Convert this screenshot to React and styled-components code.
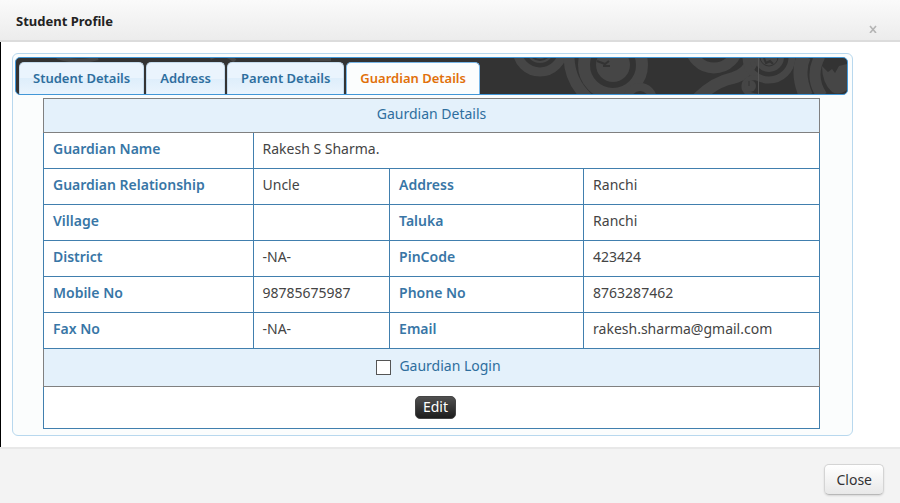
import React, { useState } from 'react';
import styled, { createGlobalStyle } from 'styled-components';

const GlobalStyle = createGlobalStyle`
  * {
    box-sizing: border-box;
  }

  body {
    margin: 0;
    background: #f3f3f3;
    color: #444;
    font-family: 'Noto Sans', 'Open Sans', sans-serif;
    font-size: 14px;
    line-height: 20px;
  }
`;

const Dialog = styled.div`
  display: flex;
  flex-direction: column;
  min-height: 100vh;
`;

const Header = styled.header`
  display: flex;
  justify-content: space-between;
  align-items: flex-start;
  padding: 11px 22px 9px 16px;
  border-bottom: 2px solid #dcdcdc;
  background: linear-gradient(#fafafa, #ececec);
`;

const Title = styled.h1`
  margin: 0;
  color: #222;
  font-size: 13px;
  line-height: 20px;
  font-weight: 700;
`;

const CloseIcon = styled.button`
  align-self: flex-end;
  height: 12px;
  padding: 0;
  border: none;
  background: none;
  color: #b4b4b4;
  cursor: pointer;

  svg {
    display: block;
  }
`;

const Body = styled.main`
  padding: 11px 47px 11px 11px;
  border-left: 1px solid #000;
  background: #fff;
`;

const TabsPanel = styled.section`
  padding: 3px 4px 6px 2px;
  border: 1px solid #b8d8ee;
  border-radius: 6px;
  background: #fbfdfd;
`;

const TabList = styled.nav`
  position: relative;
  display: flex;
  align-items: flex-end;
  height: 38px;
  padding: 0 3px;
  overflow: hidden;
  border: 1px solid #4297d7;
  border-radius: 5px;
  background: #333;
`;

// decorative layer behind the tabs
const Swirls = styled.svg`
  position: absolute;
  top: 0;
  right: 0;
`;

const Tab = styled.a`
  position: relative;
  height: 32px;
  margin-right: 2px;
  padding: 5px 13px;
  border: 1px solid ${(props) => (props.$active ? '#79b7e7' : '#c5dbec')};
  border-bottom: none;
  border-radius: 5px 5px 0 0;
  background: ${(props) =>
    props.$active ? '#fbfdfd' : 'linear-gradient(#eaf4fd 50%, #deeefb 50%, #eaf4fd)'};
  color: ${(props) => (props.$active ? '#e17009' : '#2e6e9e')};
  font-size: 13px;
  font-weight: 600;
  text-decoration: none;
  white-space: nowrap;
`;

const DetailsTable = styled.table`
  width: calc(100% - 56px);
  margin: 3px 28px 0;
  border-collapse: collapse;
  table-layout: fixed;
  background: #fff;
`;

const Row = styled.tr`
  height: 36px;
`;

const Label = styled.th`
  padding: 0 9px 4px;
  border: 1px solid #417fae;
  color: #3876a6;
  font-weight: 600;
  text-align: left;
`;

const Value = styled.td`
  padding: 0 9px 4px;
  border: 1px solid #417fae;
`;

const BandRow = styled.tr`
  height: ${(props) => props.$height};
`;

const Band = styled.td`
  padding: 0 0 4px;
  border: 1px solid #808080;
  background: #e4f1fb;
  color: #2e6e9e;
  text-align: center;
`;

const LoginLabel = styled.label`
  display: flex;
  justify-content: center;
  align-items: center;
  gap: 8px;
  padding-left: 14px;
`;

const Checkbox = styled.input`
  appearance: none;
  width: 15px;
  height: 15px;
  margin: 4px 0 0;
  border: 1px solid #555;
  background: #fff;

  &:checked {
    background: #2e6e9e;
    box-shadow: inset 0 0 0 2px #fff;
  }
`;

const Actions = styled.td`
  padding: 0;
  border: 1px solid #417fae;
  text-align: center;
`;

const EditButton = styled.button`
  height: 23px;
  margin-left: 8px;
  padding: 0 7px 2px;
  border: 1px solid #444;
  border-radius: 5px;
  background: linear-gradient(#505050, #1c1c1c);
  color: #fff;
  font: inherit;
  vertical-align: middle;
  cursor: pointer;
`;

const Footer = styled.footer`
  display: flex;
  flex: 1;
  justify-content: flex-end;
  align-items: flex-start;
  padding: 15px 16px 8px;
  border-top: 2px solid #e8e8e8;
  background: #f3f3f3;
`;

const CloseButton = styled.button`
  height: 31px;
  padding: 0 11px;
  border: 1px solid #d4d4d4;
  border-bottom-color: #b8b8b8;
  border-radius: 5px;
  background: linear-gradient(#fff, #e8e8e8);
  box-shadow: 0 1px 2px rgba(0, 0, 0, 0.12);
  color: #333;
  font: inherit;
  cursor: pointer;
`;

const tabs = ['Student Details', 'Address', 'Parent Details', 'Guardian Details'];

const details = [
  ['Guardian Relationship', 'Uncle', 'Address', 'Ranchi'],
  ['Village', '', 'Taluka', 'Ranchi'],
  ['District', '-NA-', 'PinCode', '423424'],
  ['Mobile No', '98785675987', 'Phone No', '8763287462'],
  ['Fax No', '-NA-', 'Email', 'rakesh.sharma@gmail.com'],
];

const NavPattern = () => (
  <Swirls width="832" height="36" viewBox="15 58 832 36" fill="none" aria-hidden="true">
    <g stroke="#464646">
      <circle cx="540" cy="49" r="23" strokeWidth="9" />
      <path d="M569 56 Q569 82 590 100" strokeWidth="11" />
      <circle cx="613" cy="65" r="29" strokeWidth="12" />
      <circle cx="640" cy="100" r="13" strokeWidth="8" />
      <circle cx="714" cy="44" r="24" strokeWidth="11" />
      <path d="M698 98 Q714 82 733 78 Q749 74 754 56" strokeWidth="12" />
      <circle cx="769" cy="57" r="23" strokeWidth="7" />
      <path d="M757 96 C738 95 741 75 758 78" strokeWidth="5" />
      <path d="M804 56 Q796 73 806 96" strokeWidth="14" />
      <path d="M820 56 Q809 77 822 96" strokeWidth="11" />
      <path d="M57 57 Q80 64 98 58 M210 58 q15 -7 25 3 M310 59 h21" strokeWidth="4" />
    </g>
    <g fill="#464646">
      <circle cx="540" cy="49" r="14" />
      <circle cx="613" cy="65" r="17" />
      <circle cx="769" cy="57" r="15" />
      <path d="M822 66 l6 6 4 -3 3 4 4 -7 8 -2 v26 q-8 6 -15 2 q-10 -9 -10 -26z" />
      <circle cx="750" cy="86" r="6" />
    </g>
    <g stroke="#333">
      <path d="M597 61 l8 3 4 -3 M603 66 h7 M764 58 l2 5 4 -2 3 3" strokeWidth="2" />
      <path d="M760 57 a9 9 0 0 0 18 0 M749 81 v5" />
      <circle cx="540" cy="49" r="11" strokeWidth="2" />
    </g>
    <path d="M758.5 58 v36" stroke="#555" />
  </Swirls>
);

const App = () => {
  const [login, setLogin] = useState(false);

  return (
    <>
      <GlobalStyle />
      <Dialog>
        <Header>
          <Title>Student Profile</Title>
          <CloseIcon type="button" aria-label="Close dialog">
            <svg width="10" height="14" viewBox="0 0 10 14">
              <path d="M2 7 L8 14 M8 7 L2 14" stroke="currentColor" strokeWidth="1.6" />
            </svg>
          </CloseIcon>
        </Header>

        <Body>
          <TabsPanel>
            <TabList>
              <NavPattern />
              {tabs.map((tab) => (
                <Tab key={tab} href="#" $active={tab === 'Guardian Details'}>
                  {tab}
                </Tab>
              ))}
            </TabList>

            <DetailsTable>
              <colgroup>
                <col width="27%" />
                <col width="17.6%" />
                <col width="25%" />
                <col />
              </colgroup>
              <tbody>
                <BandRow $height="34px">
                  <Band colSpan={4}>Gaurdian Details</Band>
                </BandRow>
                <Row>
                  <Label scope="row">Guardian Name</Label>
                  <Value colSpan={3}>Rakesh S Sharma.</Value>
                </Row>
                {details.map(([label, value, label2, value2]) => (
                  <Row key={label}>
                    <Label scope="row">{label}</Label>
                    <Value>{value}</Value>
                    <Label scope="row">{label2}</Label>
                    <Value>{value2}</Value>
                  </Row>
                ))}
                <BandRow $height="38px">
                  <Band colSpan={4}>
                    <LoginLabel>
                      <Checkbox
                        type="checkbox"
                        checked={login}
                        onChange={(e) => setLogin(e.target.checked)}
                      />
                      Gaurdian Login
                    </LoginLabel>
                  </Band>
                </BandRow>
                <BandRow $height="42px">
                  <Actions colSpan={4}>
                    <EditButton type="button">Edit</EditButton>
                  </Actions>
                </BandRow>
              </tbody>
            </DetailsTable>
          </TabsPanel>
        </Body>

        <Footer>
          <CloseButton type="button">Close</CloseButton>
        </Footer>
      </Dialog>
    </>
  );
};

export default App;
